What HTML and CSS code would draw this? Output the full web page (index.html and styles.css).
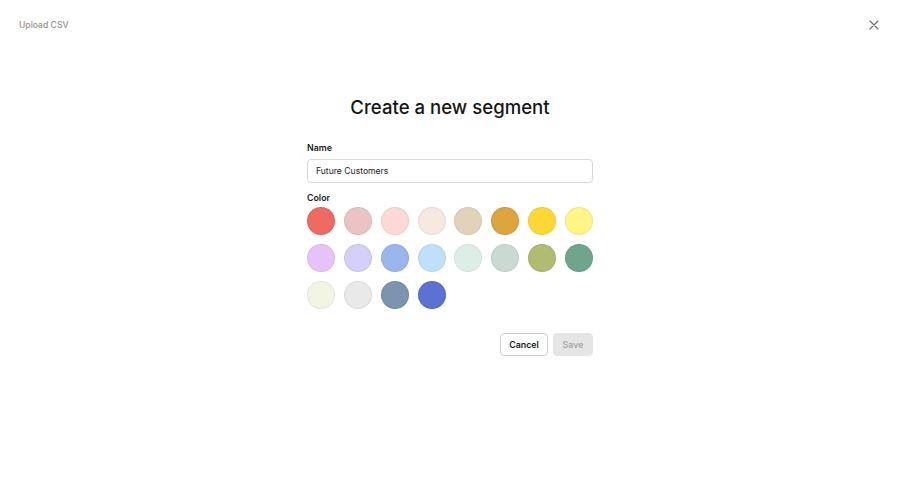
FILE: index.html
```html
<!DOCTYPE html>
<html>
<head>
<meta charset="utf-8">
<link rel="stylesheet" href="styles.css">
</head>
<body>
<header class="topbar">
  <span class="upload">Upload CSV</span>
  <button class="close" aria-label="Close">
    <svg width="10" height="10" viewBox="0 0 10 10"><path d="M1 1L9 9M9 1L1 9" stroke="#6b6b6b" stroke-width="1.1" stroke-linecap="round"/></svg>
  </button>
</header>
<main class="main">
  <h1 class="title">Create a new segment</h1>
  <form class="form">
    <label class="label">Name</label>
    <div class="input">Future Customers</div>
    <label class="label label-color">Color</label>
    <div class="swatches">
      <span class="sw" style="background:#ef6a62"></span>
      <span class="sw" style="background:#eac3c5"></span>
      <span class="sw" style="background:#fdd9d6"></span>
      <span class="sw" style="background:#f5e9e1"></span>
      <span class="sw" style="background:#e3d2ba"></span>
      <span class="sw" style="background:#dea43d"></span>
      <span class="sw" style="background:#fdd835"></span>
      <span class="sw" style="background:#fef584"></span>
      <span class="sw" style="background:#e7c2f8"></span>
      <span class="sw" style="background:#d3cff7"></span>
      <span class="sw" style="background:#9bb6ec"></span>
      <span class="sw" style="background:#bfe0fa"></span>
      <span class="sw" style="background:#dcefe7"></span>
      <span class="sw" style="background:#cbd9d3"></span>
      <span class="sw" style="background:#b2bb72"></span>
      <span class="sw" style="background:#6fa68b"></span>
      <span class="sw" style="background:#f2f5e4"></span>
      <span class="sw" style="background:#e9e9e9"></span>
      <span class="sw" style="background:#7d94ae"></span>
      <span class="sw" style="background:#5b72d3"></span>
    </div>
    <div class="actions">
      <button type="button" class="btn btn-cancel">Cancel</button>
      <button type="button" class="btn btn-save">Save</button>
    </div>
  </form>
</main>
</body>
</html>
```
FILE: styles.css
```css
* { box-sizing: border-box; }
html, body { margin: 0; padding: 0; background: #fff; }
body {
  font-family: Inter, "Noto Sans", "Liberation Sans", sans-serif;
  color: #1a1a1a;
  width: 900px;
  height: 484px;
  overflow: hidden;
}
.topbar {
  display: flex;
  justify-content: space-between;
  align-items: center;
  height: 48px;
  padding: 1px 21px 0 19px;
}
.upload {
  font-size: 8.6px;
  font-weight: 500;
  color: #9a9090;
}
.close {
  border: 0;
  background: none;
  padding: 0;
  width: 10px;
  height: 10px;
  display: flex;
}
.main {
  display: flex;
  flex-direction: column;
  align-items: center;
}
.title {
  margin: 47px 0 0;
  font-size: 18.6px;
  font-weight: 500;
  line-height: 24px;
  color: #161616;
}
.form {
  width: 286px;
  margin-top: 22px;
  display: flex;
  flex-direction: column;
}
.label {
  font-size: 8.8px;
  font-weight: 600;
  line-height: 14px;
  color: #1a1a1a;
}
.input {
  margin-top: 4px;
  height: 24px;
  border: 1px solid #d9d9d9;
  border-radius: 4px;
  padding: 0 8px;
  display: flex;
  align-items: center;
  font-size: 8.6px;
  color: #222;
}
.label-color { margin-top: 8px; }
.swatches {
  margin-top: 2px;
  display: grid;
  grid-template-columns: repeat(8, 28px);
  grid-auto-rows: 28px;
  justify-content: space-between;
  row-gap: 9px;
}
.sw {
  display: block;
  width: 28px;
  height: 28px;
  border-radius: 50%;
  box-shadow: inset 0 0 0 1px rgba(0,0,0,0.06);
}
.actions {
  margin-top: 24px;
  display: flex;
  justify-content: flex-end;
  gap: 5px;
}
.btn {
  font-family: inherit;
  height: 23px;
  border-radius: 4px;
  font-size: 8.8px;
  font-weight: 600;
  padding: 0;
}
.btn-cancel {
  width: 48px;
  background: #fff;
  border: 1px solid #cfcfcf;
  color: #1a1a1a;
}
.btn-save {
  width: 40px;
  background: #e5e5e5;
  border: 1px solid #e5e5e5;
  color: #a8a8a8;
}
```
